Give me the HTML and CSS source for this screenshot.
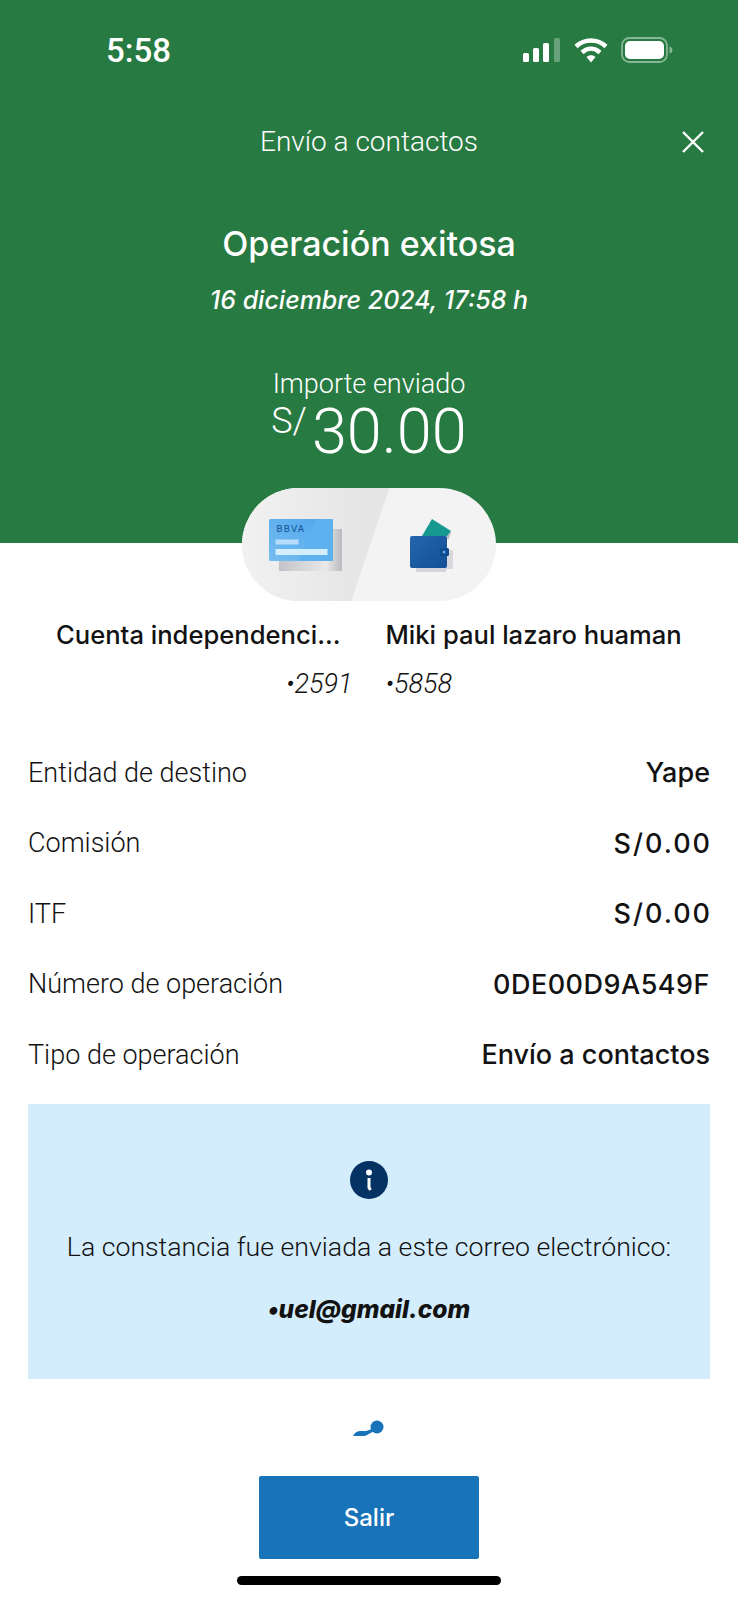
FILE: index.html
```html
<!DOCTYPE html>
<html lang="es">

<head>
  <meta charset="UTF-8" />
  <meta name="viewport" content="width=device-width, initial-scale=1.0" />
  <title>Envío a contactos</title>
  <link rel="stylesheet" href="styles.css">
</head>

<body>
  <header class="top">
    <div class="status">
      <span class="clock">5:58</span>
      <div class="status-icons">
        <svg width="38" height="24" viewBox="0 0 38 24">
          <rect x="0" y="15" width="6" height="9" rx="1.5" fill="#fff" />
          <rect x="10" y="10" width="6" height="14" rx="1.5" fill="#fff" />
          <rect x="20" y="5" width="6" height="19" rx="1.5" fill="#fff" />
          <rect x="31" y="0" width="6" height="24" rx="1.5" fill="#fff" opacity="0.3" />
        </svg>
        <svg width="34" height="26" viewBox="0 0 34 26">
          <path d="M2 9.500C10.500 1.500 23.500 1.500 32 9.500" fill="none" stroke="#fff" stroke-width="4.500" />
          <path d="M8 15.500C13.500 10.500 20.500 10.500 26 15.500" fill="none" stroke="#fff" stroke-width="4.500" />
          <path d="M12.500 20C15 17.500 19 17.500 21.500 20L17 25.500Z" fill="#fff" />
        </svg>
        <svg width="52" height="26" viewBox="0 0 52 26">
          <rect x="1" y="1" width="45" height="24" rx="7.500" fill="none" stroke="#fff" stroke-width="1.800" opacity="0.45" />
          <rect x="4" y="4" width="39" height="18" rx="5" fill="#fff" />
          <path d="M48.500 9.500C50.500 10 51.500 11.500 51.500 13C51.500 14.500 50.500 16 48.500 16.500Z" fill="#fff" opacity="0.45" />
        </svg>
      </div>
    </div>

    <div class="titlebar">
      <h1>Envío a contactos</h1>
      <svg class="close" width="24" height="24" viewBox="0 0 24 24">
        <path d="M2 2L22 22M22 2L2 22" stroke="#fff" stroke-width="2.400" fill="none" />
      </svg>
    </div>

    <h2 class="result">Operación exitosa</h2>
    <p class="date">16 diciembre 2024, 17:58 h</p>

    <p class="amount-label">Importe enviado</p>
    <div class="amount"><span class="currency">S/</span><span>30.00</span></div>
  </header>

  <div class="pill">
    <div class="pill-left"></div>
    <svg class="card" width="76" height="54" viewBox="0 0 76 54">
      <defs>
        <linearGradient id="shade" x1="0" y1="0" x2="1" y2="0">
          <stop offset="0" stop-color="#c2c3c8" />
          <stop offset="0.75" stop-color="#e9e9ea" />
          <stop offset="1" stop-color="#b9babe" />
        </linearGradient>
        <linearGradient id="face" x1="0" y1="1" x2="1" y2="0">
          <stop offset="0" stop-color="#74bdf0" />
          <stop offset="1" stop-color="#4ea6ec" />
        </linearGradient>
      </defs>
      <rect x="10" y="10" width="63" height="42" fill="url(#shade)" />
      <rect x="0" y="0" width="64" height="42" rx="1.500" fill="url(#face)" />
      <path d="M48 0H63Q64 0 64 1.500V40.500Q64 42 63 42H30Z" fill="#5db1ee" />
      <text x="7.500" y="13.300" class="card-logo">BBVA</text>
      <rect x="6.500" y="20.500" width="23" height="5" fill="#b5ddfb" />
      <rect x="6.500" y="30" width="52" height="6" fill="#d5eefe" />
    </svg>
    <svg class="wallet" width="46" height="56" viewBox="0 0 46 56">
      <defs>
        <linearGradient id="purse" x1="0" y1="0" x2="1" y2="1">
          <stop offset="0" stop-color="#2366ad" />
          <stop offset="1" stop-color="#134f96" />
        </linearGradient>
      </defs>
      <rect x="6" y="46" width="30" height="7" fill="#d4d5da" />
      <rect x="36" y="31" width="7" height="19" fill="#d8d9dd" />
      <path d="M30 12L41 13L39 20H30Z" fill="#bfc0c6" />
      <path d="M12 17L22 0L41 12L37 17Z" fill="#17998f" />
      <rect x="0" y="17" width="37" height="32" rx="2" fill="url(#purse)" />
      <rect x="30" y="29" width="9" height="8" rx="1.500" fill="#0f4a8c" />
      <circle cx="34" cy="33" r="1.500" fill="#5bb0ec" />
    </svg>
  </div>

  <div class="parties">
    <div class="party party-from">
      <strong class="party-name">Cuenta independenci…</strong>
      <em>•2591</em>
    </div>
    <div class="party party-to">
      <strong class="party-name">Miki paul lazaro huaman</strong>
      <em>•5858</em>
    </div>
  </div>

  <ul class="details">
    <li><span>Entidad de destino</span><b>Yape</b></li>
    <li><span>Comisión</span><b class="money">S/0.00</b></li>
    <li><span>ITF</span><b class="money">S/0.00</b></li>
    <li><span>Número de operación</span><b class="code">0DE00D9A549F</b></li>
    <li><span>Tipo de operación</span><b>Envío a contactos</b></li>
  </ul>

  <section class="notice">
    <svg width="40" height="40" viewBox="0 0 40 40">
      <circle cx="20" cy="20" r="19" fill="#043263" />
      <circle cx="20" cy="12.500" r="3" fill="#fff" />
      <path d="M20 18V27.500L21.500 30" fill="none" stroke="#fff" stroke-width="3" />
    </svg>
    <p>La constancia fue enviada a este correo electrónico:</p>
    <strong>•uel@gmail.com</strong>
  </section>

  <svg class="spinner" width="32" height="18" viewBox="0 0 32 18">
    <path d="M0 17C2 13 5 12 8 12C11 12 14 13 20 9L22 12C16 14 14 17 11 17Z" fill="#1973b8" />
    <circle cx="24" cy="8" r="6.500" fill="#1973b8" />
  </svg>

  <button class="exit">Salir</button>
  <div class="home-bar"></div>
</body>

</html>
```

FILE: styles.css
```css
* {
  box-sizing: border-box;
}

body {
  font-family: 'Roboto', 'Liberation Sans', sans-serif;
  margin: 0;
  height: 1600px;
  overflow: hidden;
  background-color: #fff;
  color: #121212;
  display: flex;
  flex-direction: column;
  align-items: center;
}

.top {
  width: 100%;
  height: 543px;
  background-color: #277a41;
  color: #fff;
  text-align: center;
  padding-top: 31px;
}

.status {
  display: flex;
  justify-content: space-between;
  align-items: center;
  height: 38px;
  padding: 0 65px 0 106px;
}

.clock {
  font-size: 33px;
  font-weight: 500;
}

.status-icons {
  display: flex;
  align-items: center;
  gap: 13px;
}

.titlebar {
  position: relative;
  margin-top: 54px;
}

.titlebar h1 {
  margin: 0;
  font-size: 28px;
  line-height: 38px;
  font-weight: 300;
}

.close {
  position: absolute;
  right: 33px;
  top: 7px;
}

.result {
  margin: 61px 0 0;
  font-family: 'Inter', sans-serif;
  font-size: 34px;
  line-height: 44px;
  font-weight: 500;
}

.date {
  margin: 18px 0 0;
  font-family: 'Inter', sans-serif;
  font-size: 25px;
  line-height: 32px;
  font-weight: 500;
  font-style: italic;
}

.amount-label {
  margin: 52px 0 0;
  font-size: 27px;
  line-height: 32px;
  font-weight: 300;
}

.amount {
  display: flex;
  justify-content: center;
  font-size: 63px;
  line-height: 58px;
  font-weight: 300;
  margin-top: 3px;
}

.currency {
  font-size: 36px;
  line-height: 36px;
  margin-right: 5px;
}

.pill {
  position: relative;
  width: 254px;
  height: 113px;
  margin-top: -55px;
  flex-shrink: 0;
  border-radius: 57px;
  background-color: #f3f3f4;
  overflow: hidden;
}

.pill-left {
  width: 100%;
  height: 100%;
  background: linear-gradient(90deg, #f1f1f1, #e5e5e6 50%);
  clip-path: polygon(0 0, 58% 0, 43% 100%, 0 100%);
}

.card {
  position: absolute;
  left: 27px;
  top: 31px;
}

.wallet {
  position: absolute;
  left: 168px;
  top: 31px;
}

.card-logo {
  font-family: 'Inter', sans-serif;
  font-size: 9.200px;
  font-weight: 400;
  letter-spacing: 1.200px;
  fill: #0f4f93;
}

.parties {
  width: 100%;
  display: flex;
  margin-top: 17px;
}

.party {
  flex: 1;
  display: flex;
  flex-direction: column;
  gap: 15px;
  font-size: 27px;
  line-height: 34px;
}

.party em {
  font-weight: 300;
}

.party-name {
  font-family: 'Inter', sans-serif;
  font-size: 25.600px;
  font-weight: 500;
}

.party-from {
  align-items: flex-end;
  padding-right: 17px;
}

.party-from .party-name {
  margin-right: 12px;
}

.party-to {
  padding-left: 16px;
}

.details {
  width: 100%;
  list-style: none;
  margin: 36.500px 0 0;
  padding: 0 28px;
}

.details li {
  display: flex;
  justify-content: space-between;
  align-items: center;
  height: 70.500px;
  font-size: 27px;
}

.details span {
  font-weight: 300;
}

.details b {
  font-family: 'Inter', sans-serif;
  font-size: 27px;
  font-weight: 500;
}

.details .money {
  letter-spacing: 2px;
  margin-right: -2px;
}

.details .code {
  letter-spacing: 0.500px;
}

.notice {
  width: 682px;
  height: 275px;
  flex-shrink: 0;
  margin-top: 13.500px;
  padding-top: 56px;
  background-color: #d4edfc;
  text-align: center;
}

.notice svg {
  display: block;
  margin: 0 auto;
}

.notice p {
  margin: 31px 0 0;
  font-size: 26.700px;
  line-height: 32px;
  font-weight: 300;
}

.notice strong {
  display: block;
  margin-top: 30px;
  font-family: 'Inter', sans-serif;
  font-size: 24.500px;
  line-height: 32px;
  font-weight: 800;
  font-style: italic;
}

.spinner {
  margin-top: 40px;
  flex-shrink: 0;
}

.exit {
  width: 220px;
  height: 83px;
  flex-shrink: 0;
  margin-top: 39px;
  border: none;
  border-radius: 2px;
  background-color: #1973b8;
  color: #fff;
  font-family: 'Inter', sans-serif;
  font-size: 24px;
  font-weight: 500;
}

.home-bar {
  width: 264px;
  height: 9px;
  flex-shrink: 0;
  margin-top: 17px;
  border-radius: 5px;
  background-color: #000;
}
```
